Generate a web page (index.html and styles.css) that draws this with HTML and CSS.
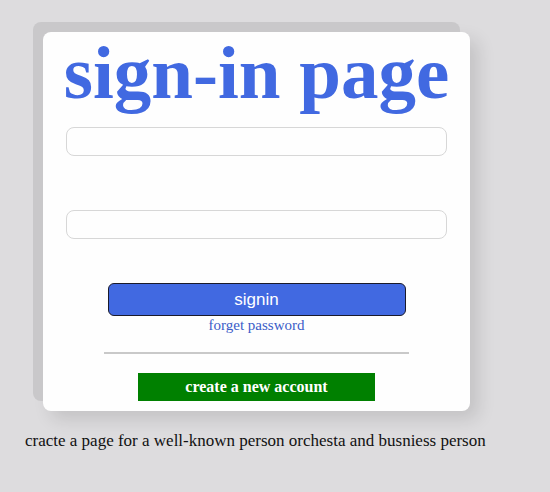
FILE: index.html
```html
<!DOCTYPE html>
<html>
<head>
<meta charset="utf-8">
<link rel="stylesheet" href="styles.css">
</head>
<body>
<div class="page">
  <div class="card">
    <h1 class="title">sign-in page</h1>
    <input class="field field-user" type="text">
    <input class="field field-pass" type="password">
    <button class="signin">signin</button>
    <a class="forget" href="#">forget password</a>
    <hr class="divider">
    <button class="create">create a new account</button>
  </div>
  <p class="note">cracte a page for a well-known person orchesta and busniess person</p>
</div>
</body>
</html>
```
FILE: styles.css
```css
html, body {
  margin: 0;
  padding: 0;
  background: #dddcde;
}
.page {
  padding: 32px 0 0 43px;
  font-family: "Liberation Serif", serif;
}
.card {
  width: 427px;
  height: 379px;
  box-sizing: border-box;
  background: #fefefe;
  border-radius: 8px;
  box-shadow: -10px -10px 0 #c9c8ca, 8px 8px 18px rgba(0, 0, 0, 0.12);
  display: flex;
  flex-direction: column;
  align-items: center;
  padding-top: 3px;
}
.title {
  margin: 0;
  font-size: 75px;
  line-height: 75px;
  font-weight: bold;
  color: #4169e1;
  white-space: nowrap;
}
.field {
  box-sizing: border-box;
  width: 381px;
  height: 29px;
  border: 1px solid #d7d7d7;
  border-radius: 8px;
  background: #fefefe;
  outline: none;
  padding: 0 8px;
}
.field-user {
  margin-top: 17px;
}
.field-pass {
  margin-top: 54px;
}
.signin {
  margin-top: 44px;
  box-sizing: border-box;
  width: 298px;
  height: 33px;
  background: #4169e1;
  border: 1.5px solid #1a1a2a;
  border-radius: 6px;
  color: #ffffff;
  font-family: "Liberation Sans", Arial, sans-serif;
  font-size: 17px;
  padding: 0;
}
.forget {
  margin-top: 0;
  font-size: 15px;
  line-height: 18px;
  color: #3a5cc8;
  text-decoration: none;
}
.divider {
  box-sizing: border-box;
  width: 305px;
  margin: 18px 0 0;
  border: none;
  border-top: 2px solid #c9c9c9;
  height: 0;
}
.create {
  margin-top: 19px;
  box-sizing: border-box;
  width: 237px;
  height: 28px;
  background: #008000;
  border: none;
  color: #ffffff;
  font-family: "Liberation Serif", serif;
  font-weight: bold;
  font-size: 16px;
  padding: 0;
}
.note {
  margin: 20px 0 0 -18px;
  font-size: 17px;
  color: #111111;
}
```
